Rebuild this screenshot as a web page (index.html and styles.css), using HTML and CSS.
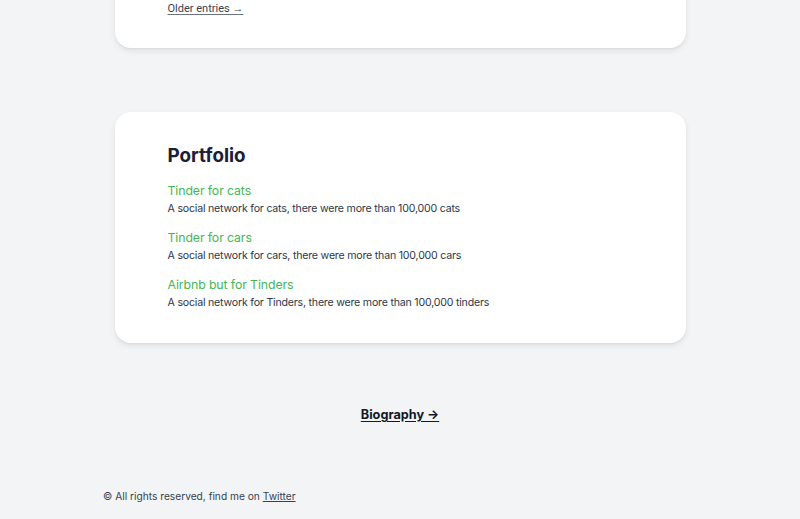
FILE: index.html
```html
<!DOCTYPE html>
<html lang="en">
<head>
<meta charset="utf-8">
<title>Portfolio</title>
<link rel="stylesheet" href="styles.css">
</head>
<body>
<main class="page">
  <section class="card card-top">
    <a class="older" href="#">Older entries →</a>
  </section>
  <section class="card card-portfolio">
    <h2 class="heading">Portfolio</h2>
    <ul class="projects">
      <li class="project">
        <a class="project-title" href="#">Tinder for cats</a>
        <p class="project-desc">A social network for cats, there were more than 100,000 cats</p>
      </li>
      <li class="project">
        <a class="project-title" href="#">Tinder for cars</a>
        <p class="project-desc">A social network for cars, there were more than 100,000 cars</p>
      </li>
      <li class="project">
        <a class="project-title" href="#">Airbnb but for Tinders</a>
        <p class="project-desc">A social network for Tinders, there were more than 100,000 tinders</p>
      </li>
    </ul>
  </section>
  <nav class="bio-nav">
    <a class="bio-link" href="#">Biography →</a>
  </nav>
</main>
<footer class="footer">
  © All rights reserved, find me on <a class="footer-link" href="#">Twitter</a>
</footer>
</body>
</html>
```
FILE: styles.css
```css
* { box-sizing: border-box; }
html, body { margin: 0; padding: 0; }
body {
  background: #f3f4f6;
  font-family: Inter, "Noto Sans", sans-serif;
  color: #1f2937;
  height: 519px;
  overflow: hidden;
}
.page {
  display: flex;
  flex-direction: column;
  align-items: center;
}
.card {
  width: 571px;
  background: #ffffff;
  border-radius: 16px;
  box-shadow: 0 3px 6px rgba(0, 0, 0, 0.08), 0 1px 2px rgba(0, 0, 0, 0.05);
  padding: 0 53px;
}
.card-top {
  margin-top: -40px;
  padding-top: 41px;
  height: 88px;
}
.older {
  display: block;
  margin-top: 0;
  width: max-content;
  font-family: Roboto, sans-serif;
  font-size: 11px;
  line-height: 16px;
  color: #374151;
  text-decoration: underline;
  text-decoration-color: #6b7280;
  text-underline-offset: 2px;
}
.card-portfolio {
  margin-top: 64px;
  padding-top: 30px;
  padding-bottom: 32px;
}
.heading {
  margin: 0;
  font-size: 18.8px;
  line-height: 28px;
  font-weight: 700;
  color: #1a2035;
  margin-bottom: 12px;
}
.projects {
  list-style: none;
  margin: 0;
  padding: 0;
  display: flex;
  flex-direction: column;
  gap: 12px;
}
.project {
  display: flex;
  flex-direction: column;
}
.project-title {
  font-size: 12.3px;
  line-height: 18px;
  letter-spacing: -0.1px;
  color: #45b653;
  text-decoration: none;
}
.project-desc {
  margin: 0;
  font-size: 10.6px;
  line-height: 17px;
  letter-spacing: -0.2px;
  color: #2d3748;
}
.bio-nav {
  margin-top: 62px;
  display: flex;
  justify-content: center;
}
.bio-link {
  font-size: 12.7px;
  line-height: 20px;
  font-weight: 700;
  color: #111827;
  text-decoration: underline;
  text-underline-offset: 2px;
}
.footer {
  margin-top: 63px;
  padding-left: 103px;
  font-family: Inter, sans-serif;
  font-size: 10.2px;
  line-height: 16px;
  color: #374151;
}
.footer-link {
  color: #374151;
  text-decoration: underline;
}
```
